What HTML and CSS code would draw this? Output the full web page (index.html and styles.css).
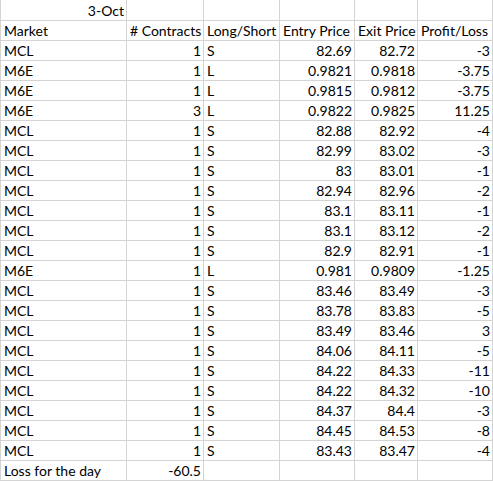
FILE: index.html
```html
<!DOCTYPE html>
<html>
<head>
<meta charset="utf-8">
<link rel="stylesheet" href="styles.css">
</head>
<body>
<div class="sheet" id="sheet">
  <div class="c r">3-Oct</div><div class="c"></div><div class="c"></div><div class="c"></div><div class="c"></div><div class="c"></div>
  <div class="c">Market</div><div class="c"># Contracts</div><div class="c">Long/Short</div><div class="c">Entry Price</div><div class="c">Exit Price</div><div class="c">Profit/Loss</div>
</div>
<script src="script.js"></script>
</body>
</html>
```
FILE: script.js
```js
const rows = [
["MCL",1,"S","82.69","82.72","-3"],
["M6E",1,"L","0.9821","0.9818","-3.75"],
["M6E",1,"L","0.9815","0.9812","-3.75"],
["M6E",3,"L","0.9822","0.9825","11.25"],
["MCL",1,"S","82.88","82.92","-4"],
["MCL",1,"S","82.99","83.02","-3"],
["MCL",1,"S","83","83.01","-1"],
["MCL",1,"S","82.94","82.96","-2"],
["MCL",1,"S","83.1","83.11","-1"],
["MCL",1,"S","83.1","83.12","-2"],
["MCL",1,"S","82.9","82.91","-1"],
["M6E",1,"L","0.981","0.9809","-1.25"],
["MCL",1,"S","83.46","83.49","-3"],
["MCL",1,"S","83.78","83.83","-5"],
["MCL",1,"S","83.49","83.46","3"],
["MCL",1,"S","84.06","84.11","-5"],
["MCL",1,"S","84.22","84.33","-11"],
["MCL",1,"S","84.22","84.32","-10"],
["MCL",1,"S","84.37","84.4","-3"],
["MCL",1,"S","84.45","84.53","-8"],
["MCL",1,"S","83.43","83.47","-4"]
];
const sheet = document.getElementById("sheet");
function cell(text, right) {
  const d = document.createElement("div");
  d.className = right ? "c r" : "c";
  d.textContent = text;
  sheet.appendChild(d);
}
rows.forEach(r => {
  cell(r[0], false);
  cell(String(r[1]), true);
  cell(r[2], false);
  cell(r[3], true);
  cell(r[4], true);
  cell(r[5], true);
});
cell("Loss for the day", false);
cell("-60.5", true);
cell("", false); cell("", false); cell("", false); cell("", false);
```
FILE: styles.css
```css
html, body {
  margin: 0;
  padding: 0;
  background: #ffffff;
}
.sheet {
  display: grid;
  grid-template-columns: 126px 77px 76px 75px 63px 75px;
  grid-template-rows: 21px;
  grid-auto-rows: 20px;
  border-left: 1px solid #d4d4d4;
  width: max-content;
  font-family: "Lato", "Liberation Sans", sans-serif;
  font-size: 14px;
  color: #000;
}
.c {
  box-sizing: border-box;
  border-right: 1px solid #d4d4d4;
  border-bottom: 1px solid #d4d4d4;
  display: flex;
  align-items: flex-end;
  padding: 0 2px 1px 3px;
  line-height: 17px;
  white-space: nowrap;
}
.r {
  justify-content: flex-end;
}
```
